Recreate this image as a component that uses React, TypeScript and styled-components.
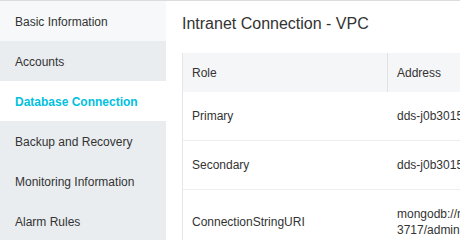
import * as React from 'react'
import styled, { createGlobalStyle } from 'styled-components'

const GlobalStyle = createGlobalStyle`
  html, body {
    margin: 0;
    padding: 0;
    background: #fff;
  }
  body {
    font-family: 'Liberation Sans', Arial, sans-serif;
    font-size: 12px;
    color: #333;
  }
`

const Page = styled.div`
  width: 460px;
  height: 240px;
  display: flex;
  border-top: 1px solid #dcdcdc;
  box-sizing: border-box;
  overflow: hidden;
`

const Sidebar = styled.nav`
  width: 166px;
  flex-shrink: 0;
  display: flex;
  flex-direction: column;
  background-color: #eaedf0;
`

const NavItem = styled.div<{ $active?: boolean; $light?: boolean }>`
  height: 40px;
  flex-shrink: 0;
  display: flex;
  align-items: center;
  padding-left: 15px;
  padding-top: 1px;
  box-sizing: border-box;
  font-size: 12px;
  color: ${({ $active }) => ($active ? '#00c1de' : '#333')};
  font-weight: ${({ $active }) => ($active ? 700 : 400)};
  background-color: ${({ $active, $light }) =>
    $active ? '#fff' : $light ? '#f7f8fa' : 'transparent'};
`

const Content = styled.main`
  flex-grow: 1;
  min-width: 0;
  padding-left: 16px;
  overflow: hidden;
`

const Title = styled.h2`
  margin: 0;
  padding-top: 14px;
  height: 52px;
  box-sizing: border-box;
  font-size: 16px;
  line-height: 18px;
  font-weight: 400;
  color: #333;
`

const Table = styled.div`
  width: 560px;
  border-left: 1px solid #e6e6e6;
`

const HeaderRow = styled.div`
  display: grid;
  grid-template-columns: 205px 1fr;
  height: 39px;
  background-color: #f5f6f7;
`

const HeaderCell = styled.div`
  display: flex;
  align-items: center;
  padding: 0 9px;
  color: #333;
  &:not(:last-child) {
    border-right: 1px solid #e2e2e2;
  }
`

const Row = styled.div`
  display: grid;
  grid-template-columns: 205px 1fr;
  align-items: center;
  min-height: 47px;
  border-bottom: 1px solid #eeeeee;
`

const Cell = styled.div`
  padding: 16px 9px;
  line-height: 16px;
  color: #333;
  white-space: pre;
`

const rows = [
  { role: 'Primary', address: 'dds-j0b3015a1b2c3d4e.mongodb.rds.aliyuncs.com:3717' },
  { role: 'Secondary', address: 'dds-j0b3015a1b2c3d4f.mongodb.rds.aliyuncs.com:3717' },
  {
    role: 'ConnectionStringURI',
    address:
      'mongodb://root:****@dds-j0b3015a1b2c3d4e.mongodb.rds.aliyuncs.com:\n3717/admin?replicaSet=mgset-1234567',
  },
]

const navItems = [
  'Basic Information',
  'Accounts',
  'Database Connection',
  'Backup and Recovery',
  'Monitoring Information',
  'Alarm Rules',
]

export default function App() {
  return (
    <>
      <GlobalStyle />
      <Page>
        <Sidebar>
          {navItems.map((label, i) => (
            <NavItem key={label} $active={i === 2} $light={i === 0}>
              {label}
            </NavItem>
          ))}
        </Sidebar>
        <Content>
          <Title>Intranet Connection - VPC</Title>
          <Table>
            <HeaderRow>
              <HeaderCell>Role</HeaderCell>
              <HeaderCell>Address</HeaderCell>
            </HeaderRow>
            {rows.map(r => (
              <Row key={r.role}>
                <Cell>{r.role}</Cell>
                <Cell>{r.address}</Cell>
              </Row>
            ))}
          </Table>
        </Content>
      </Page>
    </>
  )
}
